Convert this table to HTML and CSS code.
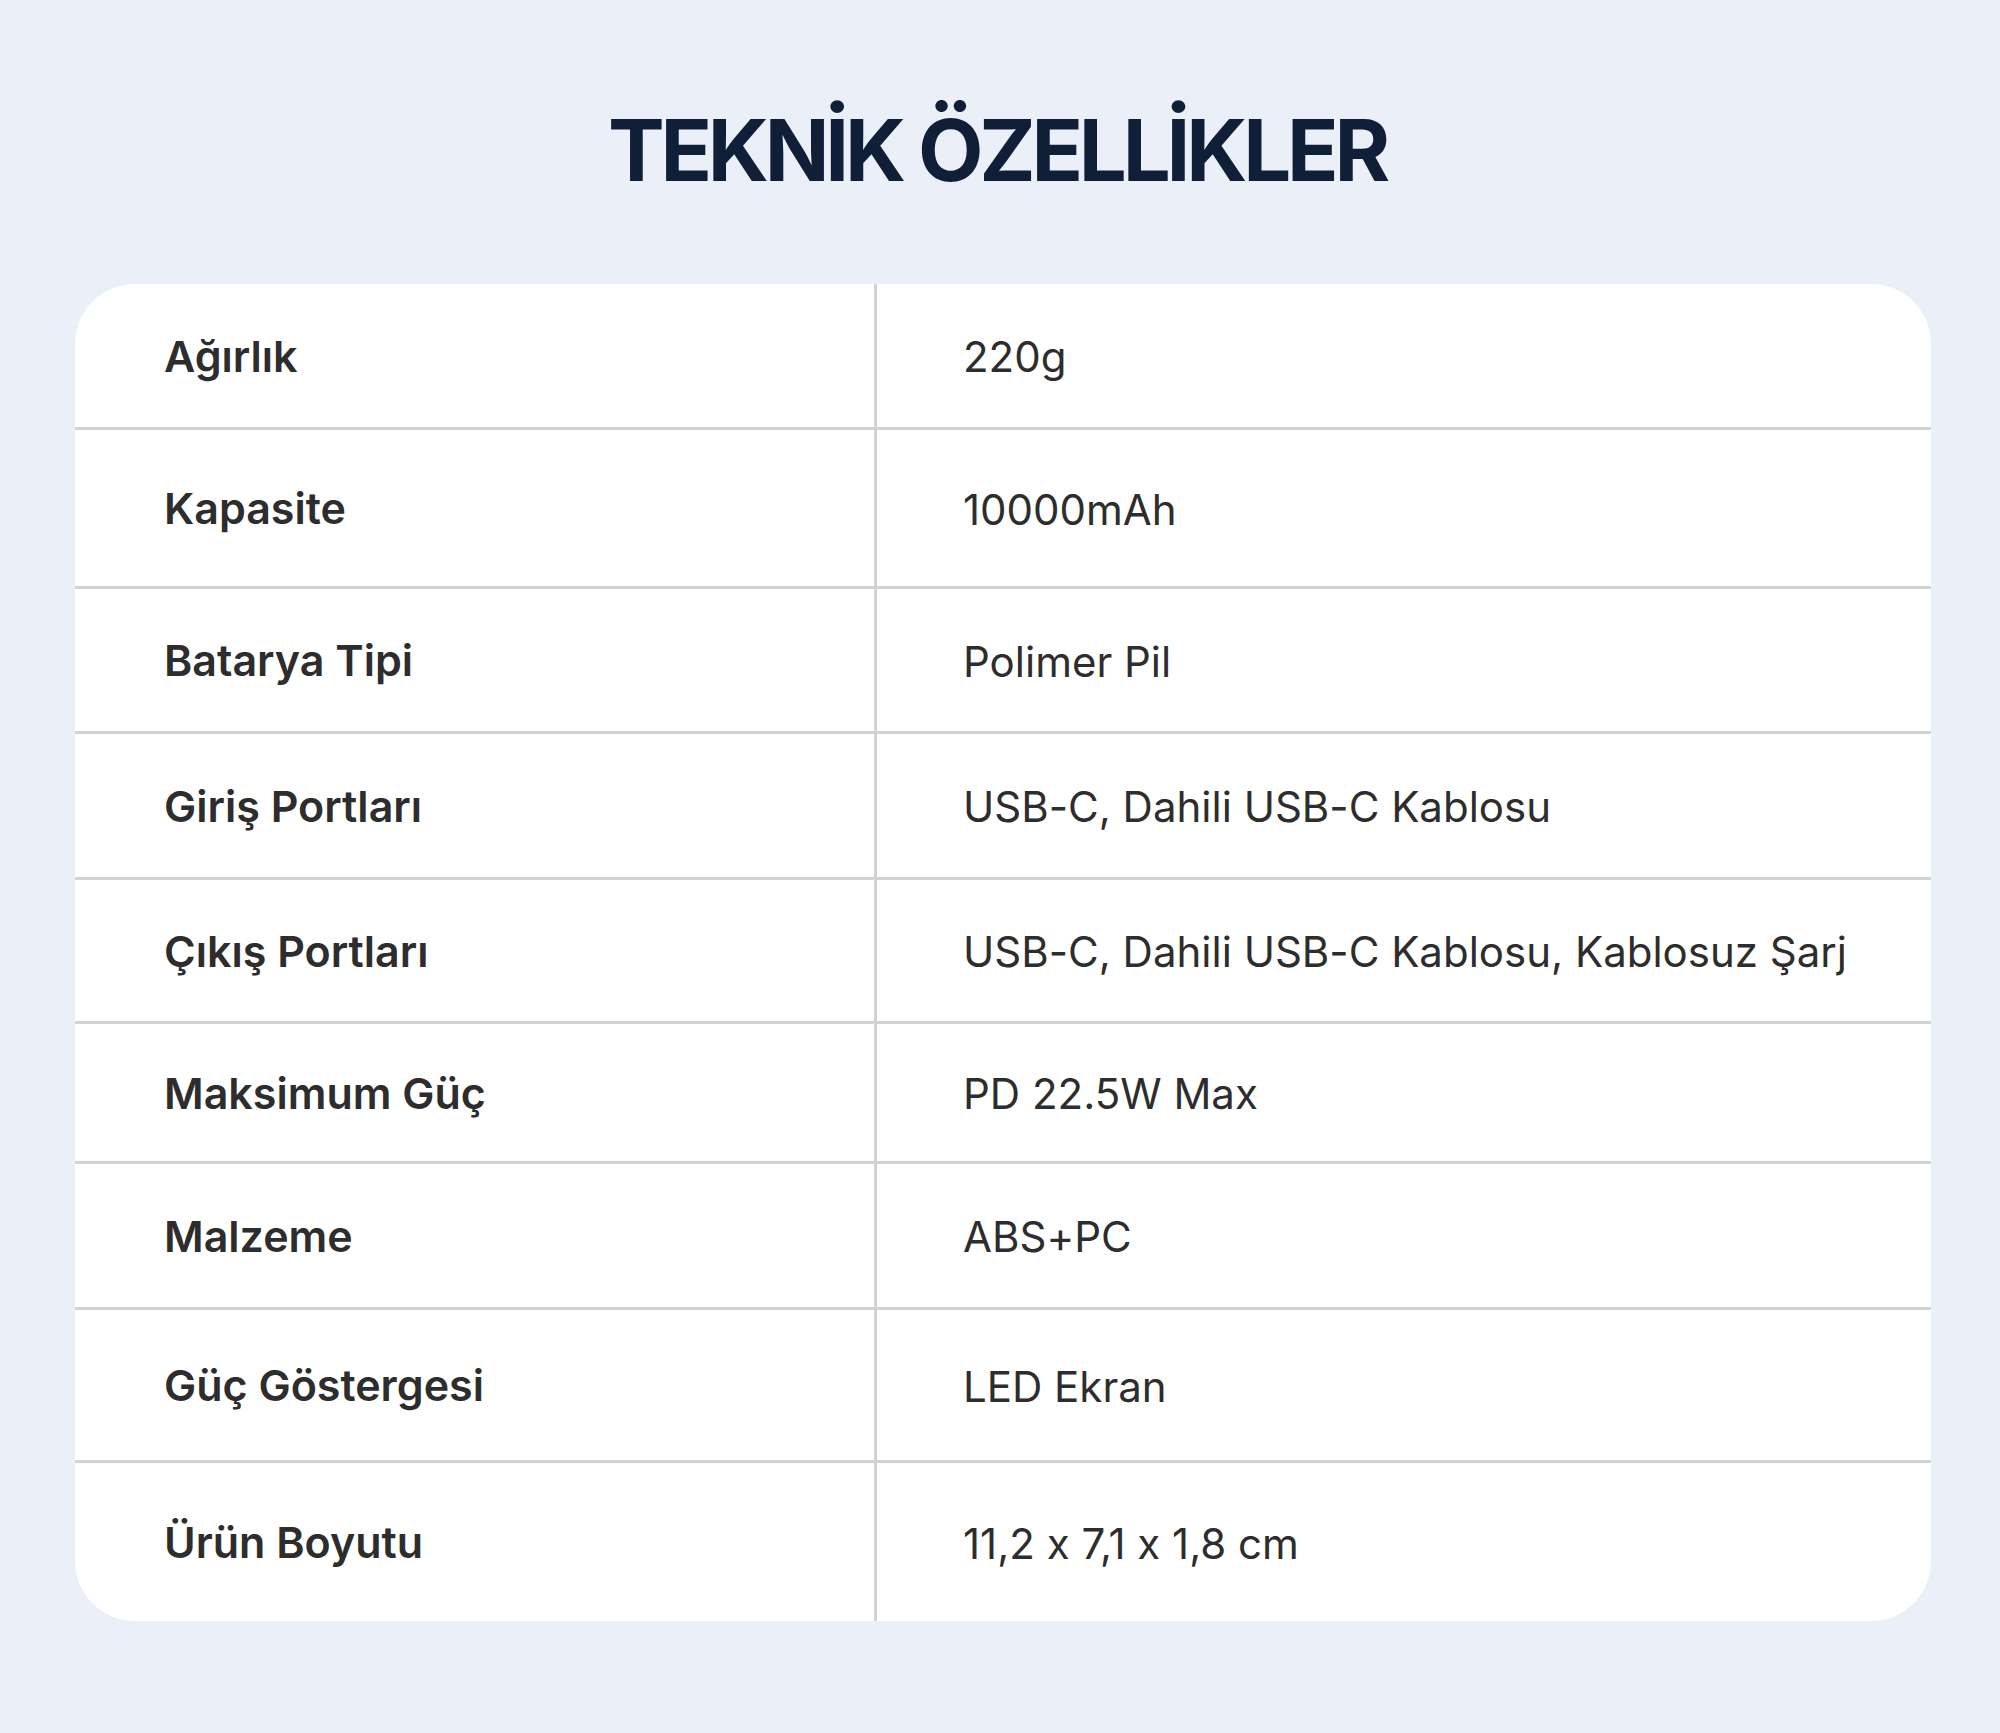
FILE: index.html
```html
<!DOCTYPE html>
<html lang="tr">
<head>
<meta charset="utf-8">
<title>Teknik Özellikler</title>
<link rel="stylesheet" href="styles.css">
</head>
<body>
<main class="page">
  <h1 class="title">TEKNİK ÖZELLİKLER</h1>
  <section class="card">
    <div class="row"><div class="label">Ağırlık</div><div class="value">220g</div></div>
    <div class="row"><div class="label">Kapasite</div><div class="value">10000mAh</div></div>
    <div class="row"><div class="label">Batarya Tipi</div><div class="value">Polimer Pil</div></div>
    <div class="row"><div class="label">Giriş Portları</div><div class="value">USB-C, Dahili USB-C Kablosu</div></div>
    <div class="row"><div class="label">Çıkış Portları</div><div class="value">USB-C, Dahili USB-C Kablosu, Kablosuz Şarj</div></div>
    <div class="row"><div class="label">Maksimum Güç</div><div class="value">PD 22.5W Max</div></div>
    <div class="row"><div class="label">Malzeme</div><div class="value">ABS+PC</div></div>
    <div class="row"><div class="label">Güç Göstergesi</div><div class="value">LED Ekran</div></div>
    <div class="row"><div class="label">Ürün Boyutu</div><div class="value">11,2 x 7,1 x 1,8 cm</div></div>
  </section>
</main>
</body>
</html>
```

FILE: styles.css
```css
html, body {
  margin: 0;
  padding: 0;
  background: #eaeff8;
}

.page {
  width: 2000px;
  height: 1733px;
  box-sizing: border-box;
  padding: 96px 69px 0 75px;
  display: flex;
  flex-direction: column;
}

.title {
  margin: 0 -69px 0 -75px;
  padding: 2px 75px 0 69px;
  height: 186px;
  font-family: "Inter", "Noto Sans", sans-serif;
  font-weight: 700;
  font-size: 85px;
  line-height: 106px;
  letter-spacing: -4.2px;
  color: #0f1f38;
  text-align: center;
}

.card {
  width: 1856px;
  background: #ffffff;
  border-radius: 60px;
  overflow: hidden;
  display: flex;
  flex-direction: column;
}

.row {
  display: grid;
  grid-template-columns: 802px 1fr;
  border-bottom: 3px solid #d2d2d2;
  font-family: "Inter", "Noto Sans", sans-serif;
  font-feature-settings: "calt" 0;
  color: #2d2d2d;
}

.row:last-child { border-bottom: none; }

.row:nth-child(1) { height: 143px; }
.row:nth-child(2) { height: 156px; }
.row:nth-child(3) { height: 142px; }
.row:nth-child(4) { height: 143px; }
.row:nth-child(5) { height: 141px; }
.row:nth-child(6) { height: 137px; }
.row:nth-child(7) { height: 143px; }
.row:nth-child(8) { height: 150px; }
.row:nth-child(9) { height: 158px; }

.label {
  display: flex;
  align-items: center;
  padding-left: 89px;
  font-size: 43px;
  font-weight: 600;
  border-right: 3px solid #d2d2d2;
}

.value {
  display: flex;
  align-items: center;
  padding-left: 86px;
  padding-top: 2px;
  font-size: 42px;
  font-weight: 400;
}
```
